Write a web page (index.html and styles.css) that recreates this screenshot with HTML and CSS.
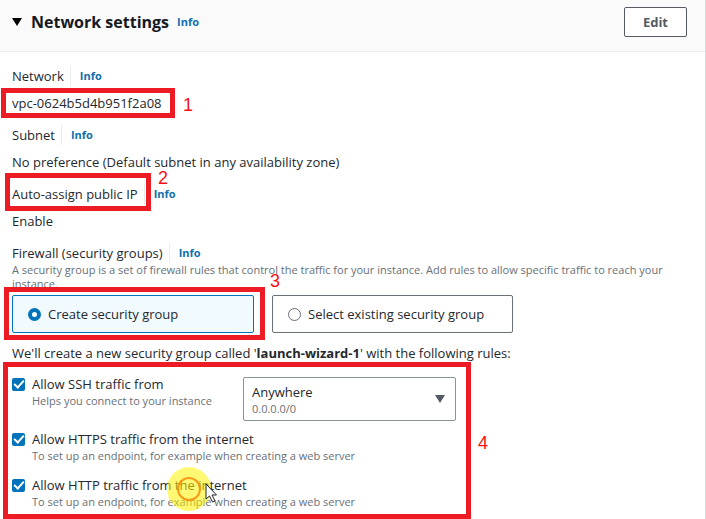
FILE: index.html
```html
<!DOCTYPE html>
<html lang="en">
<head>
<meta charset="utf-8">
<title>Network settings</title>
<link rel="stylesheet" href="styles.css">
</head>
<body>
<main class="panel">
  <header class="panel-header">
    <svg class="caret" viewBox="0 0 10 8" aria-hidden="true"><path d="M0 0h10L5 8z"/></svg>
    <h1 class="title">Network settings</h1>
    <a class="info" href="#">Info</a>
    <button class="edit" type="button">Edit</button>
  </header>
  <div class="content">
    <section class="field">
      <div class="label-row"><span class="label">Network</span><a class="info" href="#">Info</a></div>
      <div class="value marked mark-vpc">vpc-0624b5d4b951f2a08<span class="num">1</span></div>
    </section>
    <section class="field">
      <div class="label-row"><span class="label">Subnet</span><a class="info" href="#">Info</a></div>
      <div class="value">No preference (Default subnet in any availability zone)</div>
    </section>
    <section class="field">
      <div class="label-row marked mark-ip"><span class="label">Auto-assign public IP</span><a class="info" href="#">Info</a><span class="num">2</span></div>
      <div class="value">Enable</div>
    </section>
    <section class="firewall">
      <div class="label-row"><span class="label">Firewall (security groups)</span><a class="info" href="#">Info</a></div>
      <p class="hint">A security group is a set of firewall rules that control the traffic for your instance. Add rules to allow specific traffic to reach your instance.</p>
      <div class="tiles">
        <div class="marked mark-tile">
          <label class="tile selected"><input class="radio" type="radio" name="group" checked>Create security group</label>
          <span class="num">3</span>
        </div>
        <label class="tile"><input class="radio" type="radio" name="group">Select existing security group</label>
      </div>
    </section>
    <p class="summary">We'll create a new security group called '<strong>launch-wizard-1</strong>' with the following rules:</p>
    <div class="rules marked mark-rules">
      <div class="rule rule-ssh">
        <input class="check" type="checkbox" id="ssh" checked>
        <div class="rule-text"><label for="ssh">Allow SSH traffic from</label><p class="hint">Helps you connect to your instance</p></div>
        <div class="source">
          <select class="source-select" aria-label="Source"><option>Anywhere</option></select>
          <span class="source-range">0.0.0.0/0</span>
          <svg class="source-caret" viewBox="0 0 10 8" aria-hidden="true"><path d="M0 0h10L5 8z"/></svg>
        </div>
      </div>
      <div class="rule">
        <input class="check" type="checkbox" id="https" checked>
        <div class="rule-text"><label for="https">Allow HTTPS traffic from the internet</label><p class="hint">To set up an endpoint, for example when creating a web server</p></div>
      </div>
      <div class="rule">
        <input class="check" type="checkbox" id="http" checked>
        <div class="rule-text"><label for="http">Allow HTTP traffic from the internet</label><p class="hint">To set up an endpoint, for example when creating a web server</p></div>
        <svg class="pointer" viewBox="0 0 50 46" aria-hidden="true">
          <circle cx="22" cy="23" r="22" fill="#fff200" fill-opacity=".55"/>
          <circle cx="22" cy="23" r="11" fill="none" stroke="#f58a0b" stroke-opacity=".85" stroke-width="2"/>
          <path d="M39 18v15l3.500-3 3 6 2.500-1-3-6h4.500z" fill="#fff" stroke="#222"/>
        </svg>
      </div>
      <span class="num">4</span>
    </div>
  </div>
</main>
</body>
</html>
```
FILE: styles.css
```css
*, ::after { box-sizing: border-box; }

body {
  margin: 0;
  background: #fff;
  color: #24282e;
  font: 13px/20px "Open Sans", "Noto Sans", sans-serif;
  overflow: hidden;
}

p, h1 { margin: 0; }

.panel {
  min-height: 100vh;
  border-right: 1px solid #d5dbdb;
}

.panel-header {
  display: flex;
  align-items: center;
  padding: 7px 18px 14px 12px;
  background: #fafafa;
  border-bottom: 1px solid #eaeded;
}

.caret {
  width: 10px;
  height: 8px;
  margin-right: 9px;
}

.title {
  margin-right: 8px;
  color: #16191f;
  font-size: 16px;
  line-height: 24px;
}

.info {
  color: #0f6fae;
  font-size: 11px;
  font-weight: 700;
  text-decoration: none;
}

.edit {
  margin-left: auto;
  padding: 4px 18px;
  background: #fff;
  border: 1px solid #545b64;
  border-radius: 2px;
  color: #545b64;
  font: inherit;
  font-weight: 700;
}

.content {
  display: flex;
  flex-direction: column;
  gap: 10px;
  padding: 14px 12px 10px;
}

.field {
  display: grid;
  gap: 7px;
  padding-bottom: 2px;
}

.label-row {
  display: flex;
  justify-self: start;
  align-items: center;
}

.label {
  margin-right: 9px;
  padding-right: 6px;
  border-right: 1px solid #eaeded;
}

.value { justify-self: start; }

.hint {
  color: #687078;
  font-size: 11px;
  line-height: 14px;
}

.tiles {
  display: grid;
  grid-template-columns: 242px 241px;
  gap: 18px;
  margin-top: 4px;
}

.tile {
  display: flex;
  align-items: center;
  gap: 7px;
  padding: 8px 15px;
  border: 1px solid #687078;
  border-radius: 2px;
}

.selected {
  background: #f1faff;
  border-color: #0073bb;
}

.radio {
  appearance: none;
  width: 13px;
  height: 13px;
  margin: 0;
  border: 1px solid #687078;
  border-radius: 50%;
}

.radio:checked { border: 4px solid #0073bb; background: #fff; }

.rules {
  display: grid;
  gap: 8px;
  margin-top: 1px;
}

.rule {
  position: relative;
  display: flex;
  align-items: flex-start;
  min-height: 38px;
}

.rule-ssh .rule-text { width: 211px; }

.check {
  appearance: none;
  flex: none;
  width: 13px;
  height: 13px;
  margin: 4px 7px 0 0;
  border-radius: 2px;
  background: #0073bb;
}

.check::after {
  content: "";
  display: block;
  width: 6px;
  height: 10px;
  margin: 0 0 0 4px;
  border: solid #fff;
  border-width: 0 2px 2px 0;
  transform: rotate(42deg);
}

.source {
  display: grid;
  align-items: center;
  width: 213px;
  margin-top: 3px;
}

.source > * { grid-area: 1 / 1; }

.source-select {
  appearance: none;
  width: 100%;
  height: 44px;
  padding: 0 8px 14px;
  background: #fff;
  border: 1px solid #879596;
  border-radius: 2px;
  color: inherit;
  font: inherit;
}

.source-range {
  align-self: end;
  padding: 0 9px 5px;
  color: #687078;
  font-size: 11px;
  line-height: 14px;
  pointer-events: none;
}

.source-caret {
  justify-self: end;
  width: 10px;
  height: 8px;
  margin-right: 11px;
  fill: #545b64;
  pointer-events: none;
}

/* Numbered callouts laid over the form */
.marked { position: relative; }

.marked::after {
  content: "";
  position: absolute;
  border: 5px solid #ed1c24;
  pointer-events: none;
}

.num {
  position: absolute;
  color: #fa0f14;
  font: 18px/20px "Liberation Sans", Arial, sans-serif;
}

.mark-vpc::after { top: -5px; left: -11px; width: 174px; height: 30px; }
.mark-vpc .num { top: 2px; left: 171px; }
.mark-ip::after { top: -11px; left: -7px; width: 146px; height: 38px; }
.mark-ip .num { top: -16px; left: 146px; }
.mark-tile::after { top: -8px; left: -8px; width: 261px; height: 53px; }
.mark-tile .num { top: -24px; left: 258px; }
.mark-rules::after { top: -12px; left: -9px; width: 468px; height: 157px; }
.mark-rules .num { top: 59px; left: 466px; }

.pointer {
  position: absolute;
  top: -9px;
  left: 155px;
  width: 50px;
  height: 46px;
}
```
